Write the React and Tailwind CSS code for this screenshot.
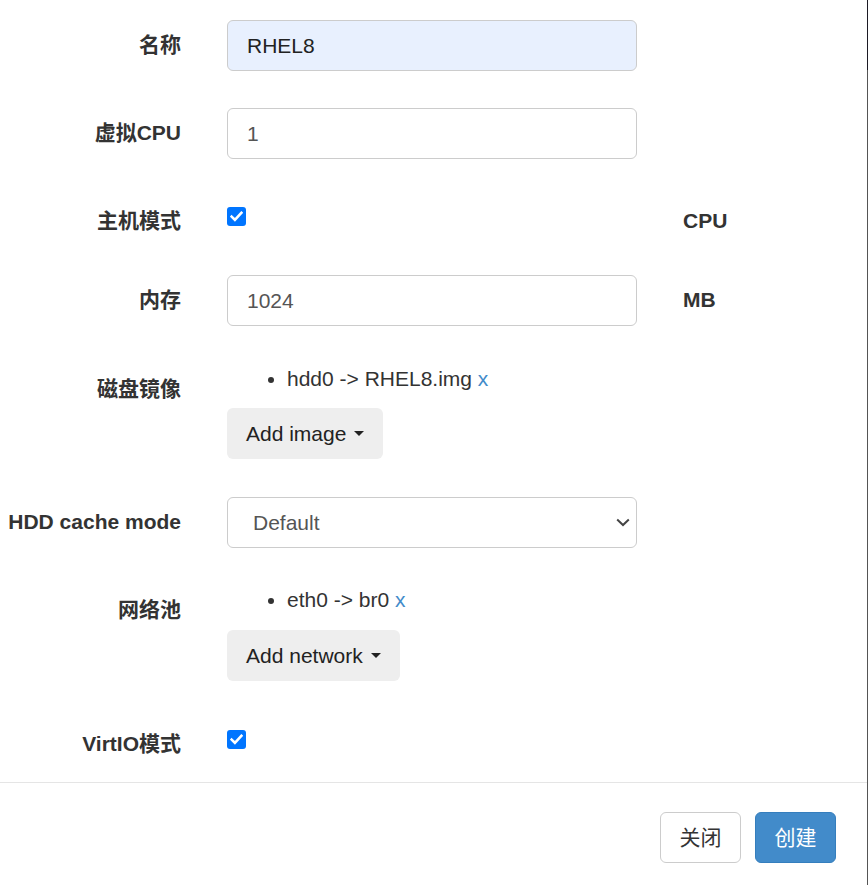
import React from 'react';

const font = "font-['Liberation_Sans','Noto_Sans_CJK_SC',sans-serif]";

function Label({ children }) {
  return (
    <div className="w-[181px] shrink-0 pt-[10px] text-right text-[21px] leading-[30px] font-bold text-[#333] whitespace-nowrap">
      {children}
    </div>
  );
}

function Check() {
  return (
    <div className="mt-[11px] w-[19px] h-[19px] rounded-[3px] bg-[#0075ff] flex items-center justify-center">
      <svg width="13" height="11" viewBox="0 0 13 11" fill="none">
        <path d="M1.6 5.6 L4.9 8.8 L11.4 1.8" stroke="white" strokeWidth="2.6" strokeLinecap="square" />
      </svg>
    </div>
  );
}

function Caret() {
  return <span className="inline-block ml-[8px] w-0 h-0 border-l-[5px] border-r-[5px] border-t-[5px] border-l-transparent border-r-transparent border-t-[#222] align-middle" />;
}

function Field({ value, light }) {
  return (
    <div
      className={`w-[410px] h-[51px] rounded-[6px] border border-[#ccc] flex items-center pl-[19px] text-[21px] ${
        light ? 'bg-white text-[#555]' : 'bg-[#e8f0fe] text-[#222]'
      }`}
    >
      {value}
    </div>
  );
}

function Side({ children }) {
  return (
    <div className="ml-[46px] pt-[10px] text-[21px] leading-[30px] font-bold text-[#333]">{children}</div>
  );
}

export default function App() {
  return (
    <div className={`h-[885px] w-[868px] overflow-hidden bg-white flex ${font}`}>
      <div className="w-[867px] flex flex-col">
        {/* form rows */}
        <div className="flex flex-col pt-[20px]">
          <div className="flex items-start">
            <Label>名称</Label>
            <div className="ml-[46px]">
              <Field value="RHEL8" />
            </div>
          </div>

          <div className="flex items-start mt-[37px]">
            <Label>虚拟CPU</Label>
            <div className="ml-[46px]">
              <Field value="1" light />
            </div>
          </div>

          <div className="flex items-start mt-[37px]">
            <Label>主机模式</Label>
            <div className="ml-[46px] w-[410px]">
              <Check />
            </div>
            <Side>CPU</Side>
          </div>

          <div className="flex items-start mt-[39px]">
            <Label>内存</Label>
            <div className="ml-[46px]">
              <Field value="1024" light />
            </div>
            <Side>MB</Side>
          </div>

          <div className="flex items-start mt-[38px]">
            <Label>磁盘镜像</Label>
            <div className="ml-[46px] flex flex-col items-start">
              <ul className="list-disc pl-[60px] text-[21px] leading-[30px] text-[#333]">
                <li>
                  hdd0 -&gt; RHEL8.img <span className="text-[#428bca]">x</span>
                </li>
              </ul>
              <button className="mt-[14px] h-[51px] px-[19px] rounded-[6px] bg-[#eeeeee] text-[21px] text-[#222] flex items-center">
                Add image
                <Caret />
              </button>
            </div>
          </div>

          <div className="flex items-start mt-[38px]">
            <Label>HDD cache mode</Label>
            <div className="ml-[46px]">
              <div className="w-[410px] h-[51px] rounded-[6px] border border-[#ccc] bg-white flex items-center justify-between pl-[25px] pr-[6px] text-[21px] text-[#555]">
                <span>Default</span>
                <svg width="14" height="9" viewBox="0 0 14 9" fill="none">
                  <path d="M1.2 1.5 L7 7 L12.8 1.5" stroke="#444" strokeWidth="2" />
                </svg>
              </div>
            </div>
          </div>

          <div className="flex items-start mt-[37px]">
            <Label>网络池</Label>
            <div className="ml-[46px] flex flex-col items-start">
              <ul className="list-disc pl-[60px] text-[21px] leading-[30px] text-[#333]">
                <li>
                  eth0 -&gt; br0 <span className="text-[#428bca]">x</span>
                </li>
              </ul>
              <button className="mt-[15px] h-[51px] px-[19px] rounded-[6px] bg-[#eeeeee] text-[21px] text-[#222] flex items-center">
                Add network
                <Caret />
              </button>
            </div>
          </div>

          <div className="flex items-start mt-[38px]">
            <Label>VirtIO模式</Label>
            <div className="ml-[46px]">
              <Check />
            </div>
          </div>
        </div>

        {/* footer */}
        <div className="mt-[23px] border-t border-[#e5e5e5] flex justify-end gap-[14px] pt-[29px] pr-[31px]">
          <button className="w-[81px] h-[51px] rounded-[6px] border border-[#ccc] bg-white text-[21px] text-[#333]">
            关闭
          </button>
          <button className="w-[81px] h-[51px] rounded-[6px] border border-[#357ebd] bg-[#428bca] text-[21px] text-white">
            创建
          </button>
        </div>
      </div>

      {/* window edge */}
      <div className="w-px flex flex-col">
        <div className="h-[70px] bg-[#1c1a24]" />
        <div className="flex-1 bg-[#555]" />
      </div>
    </div>
  );
}
